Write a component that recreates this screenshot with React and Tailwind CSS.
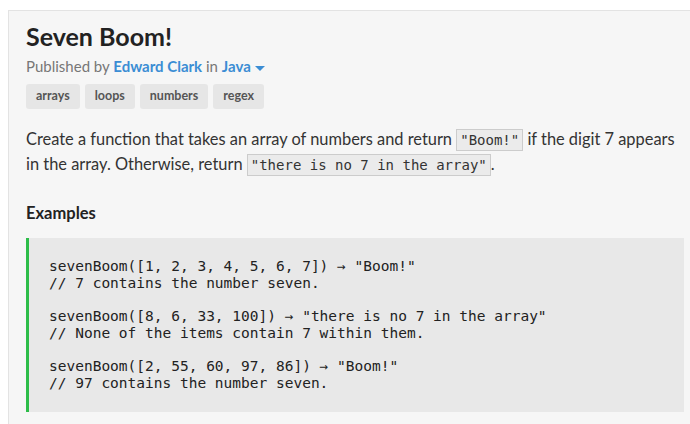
function Tag({ children }) {
  return (
    <span className="rounded-[3px] bg-[#e6e6e6] px-[10px] h-[25px] flex items-center text-[12.5px] font-bold text-[#555]">
      {children}
    </span>
  );
}

function Code({ children }) {
  return (
    <code className="border border-[#ccc] bg-[#ebebeb] px-[3px] py-[2px] font-['DejaVu_Sans_Mono',monospace] text-[14px] leading-none text-[#333]">
      {children}
    </code>
  );
}

const examples = [
  ['sevenBoom([1, 2, 3, 4, 5, 6, 7]) → "Boom!"', "// 7 contains the number seven."],
  ['sevenBoom([8, 6, 33, 100]) → "there is no 7 in the array"', "// None of the items contain 7 within them."],
  ['sevenBoom([2, 55, 60, 97, 86]) → "Boom!"', "// 97 contains the number seven."],
];

export default function App() {
  return (
    <div className="h-[424px] w-[690px] overflow-hidden bg-white pl-2 pt-[10px] font-['Lato',sans-serif]">
      <div className="h-[500px] w-[700px] border border-[#e3e3e3] bg-[#f6f6f6] pl-[17px] pt-[9px]">
        {/* Title */}
        <h1 className="text-[25px] font-bold leading-[32px] text-[#222]">Seven Boom!</h1>
        <p className="mt-[4px] text-[15px] leading-[20px] text-[#777]">
          Published by <span className="font-bold text-[#3b8dd4]">Edward Clark</span> in{" "}
          <span className="font-bold text-[#3b8dd4]">Java</span>
          <span className="ml-[4px] inline-block h-0 w-0 border-x-[5px] border-t-[5px] border-x-transparent border-t-[#3b8dd4] align-middle"></span>
        </p>
        <div className="mt-[8px] flex gap-[5px]">
          <Tag>arrays</Tag>
          <Tag>loops</Tag>
          <Tag>numbers</Tag>
          <Tag>regex</Tag>
        </div>

        {/* Description */}
        <p className="mt-[17px] w-[655px] text-[16.4px] leading-[25px] text-[#333]">
          Create a function that takes an array of numbers and return <Code>"Boom!"</Code> if the digit 7 appears
          in the array. Otherwise, return <Code>"there is no 7 in the array"</Code>.
        </p>

        <h2 className="mt-[26px] text-[16.5px] font-bold leading-[22px] text-[#222]">Examples</h2>

        {/* Examples block */}
        <div className="mt-[14px] w-[658px] border-l-[3px] border-[#2dbd49] bg-[#e8e8e8] px-5 pt-[20px] pb-5">
          <pre className="font-['DejaVu_Sans_Mono',monospace] text-[14.5px] leading-[16.7px] text-[#222]">
            {examples.map(([call, note], i) => (
              <span key={i}>
                {call}
                {"\n"}
                {note}
                {i < examples.length - 1 ? "\n\n" : ""}
              </span>
            ))}
          </pre>
        </div>
      </div>
    </div>
  );
}
